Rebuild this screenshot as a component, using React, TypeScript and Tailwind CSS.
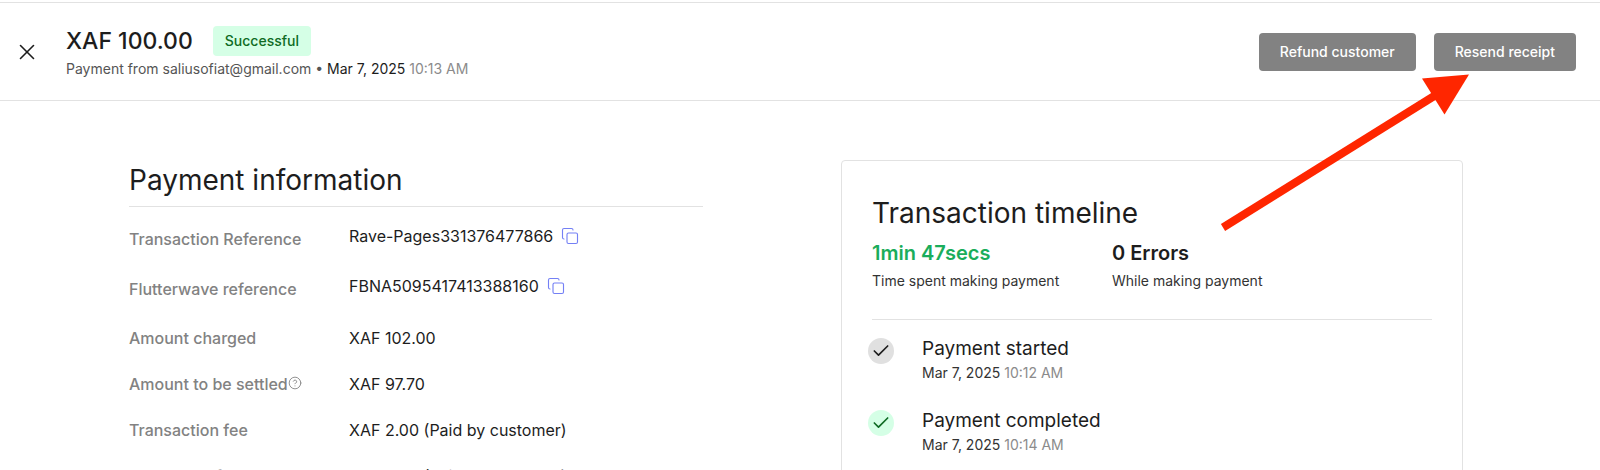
import { Check, CircleHelp, Copy, X } from 'lucide-react'
import { clsx } from 'clsx'

interface DetailRow {
  label: string
  value: string
  copyable?: boolean
  help?: boolean
}

const details: DetailRow[] = [
  { label: 'Transaction Reference', value: 'Rave-Pages331376477866', copyable: true },
  { label: 'Flutterwave reference', value: 'FBNA5095417413388160', copyable: true },
  { label: 'Amount charged', value: 'XAF 102.00' },
  { label: 'Amount to be settled', value: 'XAF 97.70', help: true },
  { label: 'Transaction fee', value: 'XAF 2.00 (Paid by customer)' },
  { label: 'Integration fee', value: 'XAF 0.00 (Paid by customer)' },
]

const events = [
  { title: 'Payment started', date: 'Mar 7, 2025', time: '10:12 AM', done: false },
  { title: 'Payment completed', date: 'Mar 7, 2025', time: '10:14 AM', done: true },
]

function Header() {
  return (
    <header className="relative flex h-[99px] items-center justify-between border-y border-[#e2e2e2] pr-6 pl-[13px]">
      <div className="flex items-center">
        <button aria-label="Close" className="p-px text-[#1d1d1d]">
          <X className="h-[26px] w-[26px]" strokeWidth={1.5} />
        </button>
        <div className="ml-[25px] pt-0.5">
          <div className="flex items-center gap-5">
            <h1 className="text-[23px] leading-8 font-medium text-[#1d1d1d]">XAF 100.00</h1>
            <span className="rounded bg-[#d5ffe6] px-3 py-1 text-sm leading-[22px] font-medium text-[#0f6b24]">
              Successful
            </span>
          </div>
          <p className="text-sm leading-6 text-[#555555]">
            Payment from saliusofiat@gmail.com • <span className="text-[#1d1d1d]">Mar 7, 2025</span>{' '}
            <span className="text-[#8b8b8b]">10:13 AM</span>
          </p>
        </div>
      </div>
      <div className="flex gap-[18px]">
        <button className="h-[38px] rounded bg-[#828282] px-[21px] text-sm font-medium text-white">
          Refund customer
        </button>
        <button className="h-[38px] rounded bg-[#828282] px-[21px] text-sm font-medium text-white">
          Resend receipt
        </button>
      </div>
      <svg
        className="pointer-events-none absolute top-[71px] right-[130px] z-10 h-[158px] w-[250px]"
        viewBox="0 0 250 158"
        aria-hidden="true"
      >
        <path d="M3 153.5 215 21.500" stroke="#ff2600" strokeWidth="8" />
        <path d="M249 0.500 202 4.500 224.500 40.500Z" fill="#ff2600" />
      </svg>
    </header>
  )
}

function PaymentInformation() {
  return (
    <section className="min-w-0 pt-0.5">
      <h2 className="border-b border-[#e2e2e2] pb-2 text-[28px] leading-9 text-[#1d1d1d]">Payment information</h2>
      <dl className="pt-2">
        {details.map(({ label, value, copyable, help }) => (
          <div key={label} className={clsx('flex items-center', copyable ? 'h-[50px] pb-2' : 'h-[46px]')}>
            <dt
              className={clsx('flex w-[220px] shrink-0 text-base font-medium text-[#828282]', copyable && 'pt-1.5')}
            >
              {label}
              {help && <CircleHelp className="mt-1 h-[14px] w-[14px]" strokeWidth={1.5} />}
            </dt>
            <dd className="flex items-center gap-2 text-base text-[#1d1d1d]">
              {value}
              {copyable && (
                <button aria-label={`Copy ${label}`} className="text-[#7480f5]">
                  <Copy className="h-[18px] w-[18px]" strokeWidth={1.5} />
                </button>
              )}
            </dd>
          </div>
        ))}
      </dl>
    </section>
  )
}

function TransactionTimeline() {
  return (
    <section className="min-w-0 rounded border border-[#e2e2e2] px-[30px] pt-[34px] pb-8">
      <h2 className="text-[28px] leading-9 text-[#1d1d1d]">Transaction timeline</h2>
      <div className="flex border-b border-[#e2e2e2] pt-[6px] pb-[26px]">
        <div className="w-[240px]">
          <p className="text-xl leading-8 font-semibold text-[#1aad5b]">1min 47secs</p>
          <p className="text-sm leading-6 text-[#333333]">Time spent making payment</p>
        </div>
        <div>
          <p className="text-xl leading-8 font-semibold text-[#1d1d1d]">0 Errors</p>
          <p className="text-sm leading-6 text-[#333333]">While making payment</p>
        </div>
      </div>
      <ul className="-ml-1 pt-[17px]">
        {events.map(({ title, date, time, done }) => (
          <li key={title} className="flex h-[72px] gap-7">
            <span
              className={clsx(
                'mt-px flex h-[26px] w-[26px] shrink-0 items-center justify-center rounded-full',
                done ? 'bg-[#d5ffe6] text-[#0f6b24]' : 'bg-[#e0e0e0] text-[#1d1d1d]'
              )}
            >
              <Check className="h-5 w-5" strokeWidth={2} />
            </span>
            <div>
              <p className="text-[19px] leading-6 text-[#1d1d1d]">{title}</p>
              <p className="text-sm leading-6 text-[#333333]">
                {date} <span className="text-[#8b8b8b]">{time}</span>
              </p>
            </div>
          </li>
        ))}
      </ul>
    </section>
  )
}

export default function App() {
  return (
    <div className="h-screen overflow-hidden bg-white pt-0.5 font-['Inter',sans-serif]">
      <Header />
      <main className="grid grid-cols-[574fr_622fr] gap-[138px] pt-[59px] pr-[137px] pl-[129px]">
        <PaymentInformation />
        <TransactionTimeline />
      </main>
    </div>
  )
}
